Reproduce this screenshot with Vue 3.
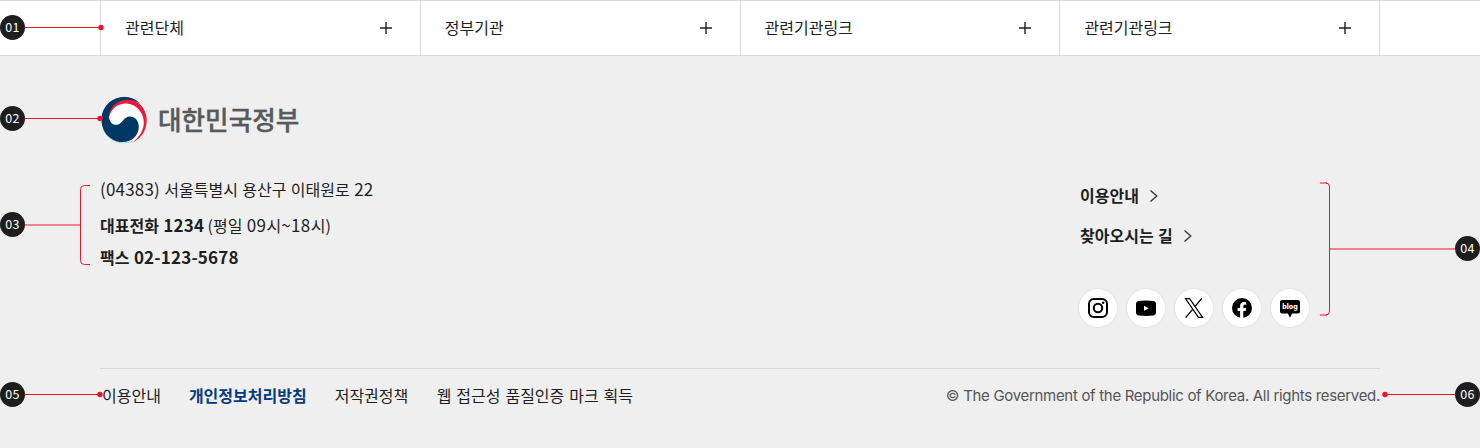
<script setup>
const related = ['관련단체', '정부기관', '관련기관링크', '관련기관링크']
const shortcuts = ['이용안내', '찾아오시는 길']
const policies = [
  { label: '이용안내' },
  { label: '개인정보처리방침', strong: true },
  { label: '저작권정책' },
  { label: '웹 접근성 품질인증 마크 획득' },
]
const marks = ['01', '02', '03', '04', '05', '06']
</script>

<template>
  <footer class="footer">
    <nav class="related">
      <button v-for="(label, i) in related" :key="i" class="related-item">
        <span>{{ label }}</span>
        <svg width="14" height="14" viewBox="0 0 14 14"><path d="M7 1v12M1 7h12" /></svg>
      </button>
    </nav>

    <div class="inner">
      <div class="logo">
        <svg class="emblem" width="48" height="48" viewBox="30.700 17.700 144 144">
          <circle cx="103" cy="89" r="71" fill="#fff" />
          <path d="M40 118A69 69 0 0 0 130 153" fill="none" stroke="#8fd0ee" stroke-width="3" />
          <path d="M57 82C54 48 84 26 116 27C146 30 170 56 171 88C171 121 155 145 128 157C150 139 163 120 162 94C161 66 139 42 110 40C86 39 65 54 57 82Z" fill="#f0193a" />
          <path d="M152 41A68 68 0 0 0 35 88C35 129 66 156 99 156C128 156 147 135 147 110C147 91 135 79 120 79C102 79 99 101 82 104C68 106 57 94 58 77C59 51 82 30 112 29C128 29 142 34 152 41Z" fill="#003764" />
        </svg>
        <span class="wordmark">대한민국정부</span>
      </div>

      <div class="info">
        <address>
          <p class="addr"><span class="num">(04383)</span> 서울특별시 용산구 이태원로 <span class="num">22</span></p>
          <p class="tel"><b>대표전화 <span class="num">1234</span></b> <span class="hours">(평일 <span class="num">09</span>시<span class="num">~18</span>시)</span></p>
          <p class="fax"><b>팩스 <span class="num">02-123-5678</span></b></p>
        </address>
        <div class="side">
          <a v-for="s in shortcuts" :key="s" class="shortcut">
            <span>{{ s }}</span>
            <svg width="10" height="14" viewBox="0 0 10 14"><path d="M1.500 1.500 7.800 7 1.500 12.500" /></svg>
          </a>
          <div class="social">
            <a>
              <svg width="20" height="20" viewBox="0 0 20 20" fill="none" stroke="#000" stroke-width="2">
                <rect x="1" y="1" width="18" height="18" rx="5" /><circle cx="10" cy="10" r="4.200" />
                <circle cx="15.200" cy="4.800" r="1.200" fill="#000" stroke="none" />
              </svg>
            </a>
            <a>
              <svg width="20" height="20" viewBox="0 0 20 20">
                <path d="M3 3Q10 2 17 3Q20 3.300 20 6V14.500Q20 17.200 17 17.500Q10 18.400 3 17.500Q0 17.200 0 14.500V6Q0 3.300 3 3Z" />
                <path d="M8 7.800 12.800 10.300 8 12.800Z" fill="#fff" />
              </svg>
            </a>
            <a>
              <svg width="20" height="20" viewBox="0 0 20 20" fill="none" stroke="#000">
                <path d="M1.500.6H5.600L18.600 19.400H14.400Z" stroke-width="1.200" />
                <path d="M17.800.3 11.100 8.300M8.700 11.400 1.600 19.700" stroke-width="1.300" />
              </svg>
            </a>
            <a>
              <svg width="20" height="20" viewBox="0 0 20 20">
                <circle cx="10" cy="10" r="10" />
                <path d="M8.100 20V13H5.600V10H8.100V8C8.100 5.300 9.600 4 12 4L14.200 4.200V6.700H12.900C11.700 6.700 11.300 7.400 11.300 8.200V10H14.100L13.600 13H11.300V20Z" fill="#fff" />
              </svg>
            </a>
            <a>
              <svg width="20" height="20" viewBox="0 0 20 20">
                <path d="M2 2H18Q20 2 20 4V13.500Q20 15.500 18 15.500H12.200L10 19.800 7.800 15.500H2Q0 15.500 0 13.500V4Q0 2 2 2Z" />
                <text x="10" y="10.800" class="blog">blog</text>
              </svg>
            </a>
          </div>
        </div>
      </div>

      <div class="bottom">
        <nav class="policies">
          <a v-for="p in policies" :key="p.label" :class="{ strong: p.strong }">{{ p.label }}</a>
        </nav>
        <p class="copy">© The Government of the Republic of Korea. All rights reserved.</p>
      </div>
    </div>

    <svg class="lines" width="1480" height="448" fill="none" stroke="#eb1528">
      <path d="M25 27.500H101M25 118.500H100M25 394.500H100M1385 394.500H1455" />
      <path d="M25 225H80M1330 249H1455" stroke-width="2" stroke-opacity=".5" />
      <path d="M90 185.500H84.500Q80.500 185.500 80.500 189.500V260.500Q80.500 264.500 84.500 264.500H90" />
      <path d="M1326 183Q1329.500 183 1329.500 187V311Q1329.500 315 1326 315" />
      <path d="M1320 183H1327M1320 315H1327" stroke-width="2" stroke-opacity=".5" />
      <g fill="#eb1528" stroke="none">
        <circle cx="101" cy="27.500" r="2.700" /><circle cx="100" cy="118.500" r="2.700" />
        <circle cx="100" cy="394.500" r="2.700" /><circle cx="1385" cy="394.500" r="2.700" />
      </g>
    </svg>
    <span v-for="m in marks" :key="m" class="mark" :class="'m' + m">{{ m }}</span>
  </footer>
</template>

<style>
body { background: #efefef; }
</style>

<style scoped>
.footer {
  position: relative;
  width: 1480px;
  height: 448px;
  overflow: hidden;
  background: #efefef;
  color: #1e1e1e;
  font-family: "Noto Sans CJK KR", sans-serif;
  font-size: 16px;
  word-spacing: .8px;
}
.footer * { box-sizing: border-box; }
p { margin: 0; white-space: nowrap; }
.related {
  display: flex;
  height: 56px;
  padding: 0 100px;
  background: #fff;
  border-top: 1px solid #d8d8d8;
  border-bottom: 1px solid #d8d8d8;
}
.related-item {
  display: flex;
  flex: 1;
  align-items: center;
  justify-content: space-between;
  padding: 0 27px 0 24px;
  border: 0;
  border-left: 1px solid #d8d8d8;
  background: none;
  color: inherit;
  font: inherit;
}
.related-item span { padding-bottom: 2px; line-height: 24px; }
.related-item:last-child { border-right: 1px solid #d8d8d8; }
.related-item svg { stroke: #1e1e1e; stroke-width: 1.4; }
.inner { padding: 40px 100px 0; }
.logo { display: flex; align-items: center; gap: 10px; height: 48px; }
.wordmark {
  padding-bottom: 3px;
  color: #58595b;
  font-size: 25.600px;
  font-weight: 500;
  line-height: 44px;
  -webkit-text-stroke: .4px #58595b;
}
.info { display: flex; justify-content: space-between; height: 224px; padding-top: 29px; }
address { font-style: normal; }
.num { font-size: 17px; letter-spacing: .18px; line-height: 1; }
.addr { line-height: 32px; }
.tel { margin-top: 4px; line-height: 32px; }
.hours { margin-left: -1px; }
.hours .num { letter-spacing: .4px; }
.fax { line-height: 32px; }
.side { width: 300px; padding-top: 3px; }
.shortcut { display: flex; align-items: center; gap: 10px; height: 40px; font-weight: 700; }
.shortcut span { padding-bottom: 2px; line-height: 24px; }
.shortcut svg { fill: none; stroke: #333; stroke-width: 1.3; }
.social { display: flex; gap: 8px; margin: 32px 0 0 -2px; }
.social a {
  display: flex;
  align-items: center;
  justify-content: center;
  width: 40px;
  height: 40px;
  border: 1px solid #e4e4e4;
  border-radius: 50%;
  background: #fff;
}
.blog { fill: #fff; font-family: Inter, sans-serif; font-size: 7px; font-weight: 800; text-anchor: middle; word-spacing: 0; }
.bottom {
  display: flex;
  align-items: center;
  justify-content: space-between;
  height: 56px;
  padding-bottom: 1px;
  border-top: 1px solid #d8d8d8;
}
.policies { display: flex; gap: 28px; padding: 0 0 3px 2px; line-height: 24px; word-spacing: 1.300px; }
.policies a:last-child { padding-left: .5px; }
.strong { color: #063a80; font-weight: 700; }
.copy {
  color: #555;
  font-family: Inter, sans-serif;
  font-size: 15px;
  line-height: 24px;
  letter-spacing: -.31px;
  word-spacing: 0;
}
.lines { position: absolute; top: 0; left: 0; }
.mark {
  position: absolute;
  left: 0;
  width: 25px;
  height: 25px;
  border-radius: 50%;
  background: #1e1e1e;
  color: #fff;
  font-size: 12.500px;
  line-height: 24px;
  letter-spacing: .3px;
  text-align: center;
}
.m01 { top: 15px; }
.m02 { top: 106px; }
.m03 { top: 212px; }
.m04 { top: 236px; left: 1455px; }
.m05 { top: 382px; }
.m06 { top: 382px; left: 1455px; }
</style>
